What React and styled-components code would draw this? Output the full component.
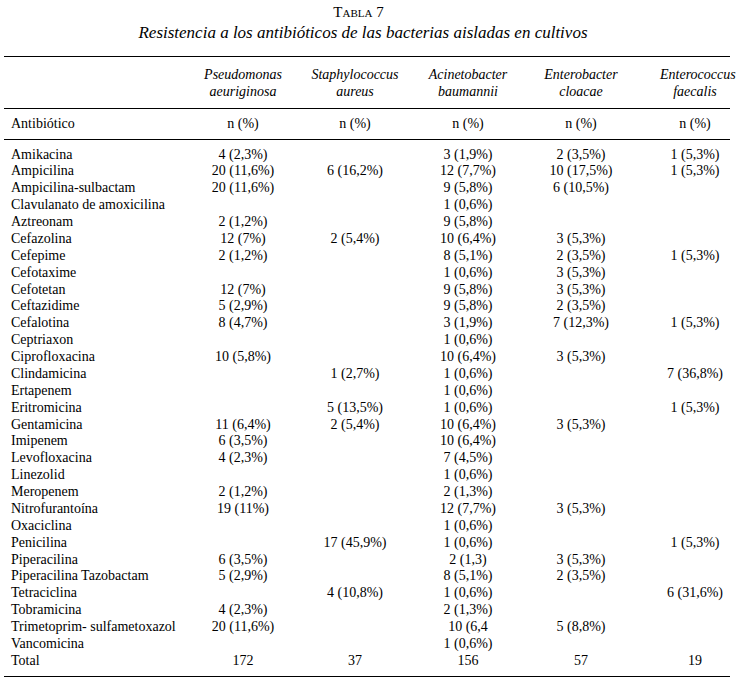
import styled, { createGlobalStyle } from "styled-components";

const GlobalStyle = createGlobalStyle`
  html, body {
    margin: 0;
    padding: 0;
    background: #fff;
  }
  body {
    font-family: "Liberation Serif", "Times New Roman", serif;
    color: #000;
  }
`;

const species = [
  ["Pseudomonas", "aeuriginosa"],
  ["Staphylococcus", "aureus"],
  ["Acinetobacter", "baumannii"],
  ["Enterobacter", "cloacae"],
  ["Enterococcus", "faecalis"],
];

const rows = [
  ["Amikacina", "4 (2,3%)", "", "3 (1,9%)", "2 (3,5%)", "1 (5,3%)"],
  ["Ampicilina", "20 (11,6%)", "6 (16,2%)", "12 (7,7%)", "10 (17,5%)", "1 (5,3%)"],
  ["Ampicilina-sulbactam", "20 (11,6%)", "", "9 (5,8%)", "6 (10,5%)", ""],
  ["Clavulanato de amoxicilina", "", "", "1 (0,6%)", "", ""],
  ["Aztreonam", "2 (1,2%)", "", "9 (5,8%)", "", ""],
  ["Cefazolina", "12 (7%)", "2 (5,4%)", "10 (6,4%)", "3 (5,3%)", ""],
  ["Cefepime", "2 (1,2%)", "", "8 (5,1%)", "2 (3,5%)", "1 (5,3%)"],
  ["Cefotaxime", "", "", "1 (0,6%)", "3 (5,3%)", ""],
  ["Cefotetan", "12 (7%)", "", "9 (5,8%)", "3 (5,3%)", ""],
  ["Ceftazidime", "5 (2,9%)", "", "9 (5,8%)", "2 (3,5%)", ""],
  ["Cefalotina", "8 (4,7%)", "", "3 (1,9%)", "7 (12,3%)", "1 (5,3%)"],
  ["Ceptriaxon", "", "", "1 (0,6%)", "", ""],
  ["Ciprofloxacina", "10 (5,8%)", "", "10 (6,4%)", "3 (5,3%)", ""],
  ["Clindamicina", "", "1 (2,7%)", "1 (0,6%)", "", "7 (36,8%)"],
  ["Ertapenem", "", "", "1 (0,6%)", "", ""],
  ["Eritromicina", "", "5 (13,5%)", "1 (0,6%)", "", "1 (5,3%)"],
  ["Gentamicina", "11 (6,4%)", "2 (5,4%)", "10 (6,4%)", "3 (5,3%)", ""],
  ["Imipenem", "6 (3,5%)", "", "10 (6,4%)", "", ""],
  ["Levofloxacina", "4 (2,3%)", "", "7 (4,5%)", "", ""],
  ["Linezolid", "", "", "1 (0,6%)", "", ""],
  ["Meropenem", "2 (1,2%)", "", "2 (1,3%)", "", ""],
  ["Nitrofurantoína", "19 (11%)", "", "12 (7,7%)", "3 (5,3%)", ""],
  ["Oxaciclina", "", "", "1 (0,6%)", "", ""],
  ["Penicilina", "", "17 (45,9%)", "1 (0,6%)", "", "1 (5,3%)"],
  ["Piperacilina", "6 (3,5%)", "", "2 (1,3)", "3 (5,3%)", ""],
  ["Piperacilina Tazobactam", "5 (2,9%)", "", "8 (5,1%)", "2 (3,5%)", ""],
  ["Tetraciclina", "", "4 (10,8%)", "1 (0,6%)", "", "6 (31,6%)"],
  ["Tobramicina", "4 (2,3%)", "", "2 (1,3%)", "", ""],
  ["Trimetoprim- sulfametoxazol", "20 (11,6%)", "", "10 (6,4", "5 (8,8%)", ""],
  ["Vancomicina", "", "", "1 (0,6%)", "", ""],
  ["Total", "172", "37", "156", "57", "19"],
];

const colWidths = [183, 112, 112, 114, 112, 93];

export default function App() {
  return (
    <Page>
      <GlobalStyle />
      <Caption>
        <TableNumber>Tabla 7</TableNumber>
        <TableTitle>
          Resistencia a los antibióticos de las bacterias aisladas en cultivos
        </TableTitle>
      </Caption>
      <Table>
        <colgroup>
          {colWidths.map((w, i) => (
            <col key={i} style={{ width: w }} />
          ))}
        </colgroup>
        <thead>
          <SpeciesRow>
            <th />
            {species.map(([genus, name], i) => (
              <SpeciesCell key={genus} $last={i === species.length - 1}>
                {genus}
                <br />
                {name}
              </SpeciesCell>
            ))}
          </SpeciesRow>
          <UnitRow>
            <LabelCell as="th">Antibiótico</LabelCell>
            {species.map(([genus], i) => (
              <ValueCell as="th" key={genus} $last={i === species.length - 1}>
                n (%)
              </ValueCell>
            ))}
          </UnitRow>
        </thead>
        <Body>
          {rows.map(([name, ...values]) => (
            <DataRow key={name}>
              <LabelCell>{name}</LabelCell>
              {values.map((v, i) => (
                <ValueCell key={i} $last={i === values.length - 1}>
                  {v}
                </ValueCell>
              ))}
            </DataRow>
          ))}
        </Body>
      </Table>
    </Page>
  );
}

const Page = styled.div`
  width: 737px;
  padding: 3px 0 0 4px;
  box-sizing: border-box;
`;

const Caption = styled.div`
  display: flex;
  flex-direction: column;
  align-items: center;
  width: 718px;
  margin-bottom: 13px;
`;

const TableNumber = styled.div`
  font-size: 15px;
  line-height: 19px;
  font-variant: small-caps;
  margin-right: 9px;
`;

const TableTitle = styled.div`
  font-size: 17px;
  line-height: 21px;
  font-style: italic;
`;

const Table = styled.table`
  width: 726px;
  table-layout: fixed;
  border-collapse: collapse;
  border-bottom: 1.5px solid #000;
  font-family: "Liberation Serif", "Times New Roman", serif;
  font-size: 14px;
  color: #000;
`;

const SpeciesRow = styled.tr`
  border-top: 1.5px solid #000;
  border-bottom: 1.5px solid #000;
`;

const SpeciesCell = styled.th`
  font-weight: normal;
  font-style: italic;
  line-height: 17px;
  padding: 9px 0 8px ${(p) => (p.$last ? "23px" : "0")};
  text-align: center;
  white-space: nowrap;
`;

const UnitRow = styled.tr`
  height: 31px;
  border-bottom: 1.5px solid #000;
`;

const LabelCell = styled.td`
  font-weight: normal;
  text-align: left;
  padding: 0 0 0 7px;
  white-space: nowrap;
`;

const ValueCell = styled.td`
  font-weight: normal;
  text-align: center;
  padding: 0 0 0 ${(p) => (p.$last ? "23px" : "0")};
  white-space: nowrap;
`;

const Body = styled.tbody`
  &::before {
    content: "";
    display: table-row;
    height: 7px;
  }
  &::after {
    content: "";
    display: table-row;
    height: 7px;
  }
`;

const DataRow = styled.tr`
  height: 16.87px;
  line-height: 16.87px;
`;
